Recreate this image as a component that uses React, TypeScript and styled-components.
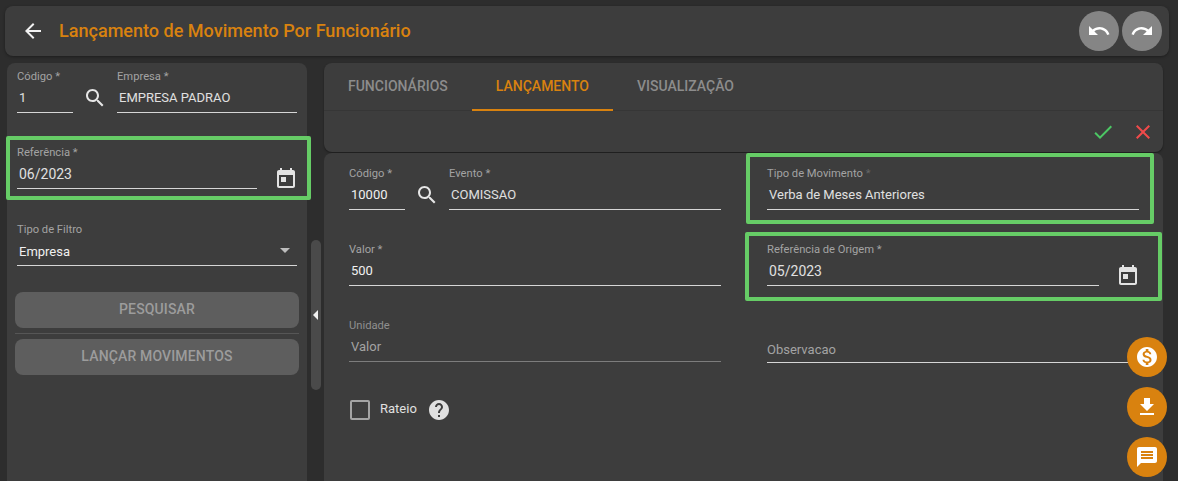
import React from "react";
import styled, { createGlobalStyle } from "styled-components";

const GlobalStyle = createGlobalStyle`
  html, body { margin: 0; padding: 0; height: 481px; overflow: hidden; background: #2d2d2d; }
  * { box-sizing: border-box; }
  body { font-family: Roboto, "Liberation Sans", sans-serif; }
`;

const Page = styled.div`
  position: relative;
  width: 1178px;
  height: 481px;
  overflow: hidden;
  padding: 6px 0 0 0;
`;

const Header = styled.header`
  display: flex;
  align-items: center;
  height: 50px;
  margin: 0 9px 7px 5px;
  padding: 0 7px 0 16px;
  background: #3d3d3d;
  border-radius: 8px;
  box-shadow: 0 1px 3px rgba(0, 0, 0, 0.35);
`;

const Title = styled.h1`
  flex: 1;
  margin: 0 0 0 14px;
  font-size: 18.05px;
  line-height: 24px;
  font-weight: 500;
  color: #d9820f;
`;

const RoundButton = styled.button`
  display: flex;
  align-items: center;
  justify-content: center;
  width: 40px;
  height: 40px;
  margin-left: 3px;
  padding: 0;
  border: 0;
  border-radius: 50%;
  background: #858585;
  color: #fff;
`;

const Icon = styled.svg<{ $size?: number; $color?: string }>`
  display: block;
  flex: none;
  width: ${(p) => p.$size ?? 24}px;
  height: ${(p) => p.$size ?? 24}px;
  fill: ${(p) => p.$color ?? "currentColor"};
`;

const Main = styled.main`
  display: flex;
  align-items: flex-start;
  margin-left: 7px;
`;

const Sidebar = styled.aside`
  width: 300px;
  height: 418px;
  padding: 6px 10px 0;
  background: #3d3d3d;
  border-radius: 8px 8px 0 0;
`;

const Gutter = styled.div`
  flex: none;
  width: 17px;
  padding: 177px 3px 0 4px;
`;

const Handle = styled.div`
  display: flex;
  align-items: center;
  height: 150px;
  padding-left: 2px;
  background: #4a4a4a;
  border-radius: 5px;
`;

const HandleArrow = styled.span`
  width: 0;
  height: 0;
  border-top: 5px solid transparent;
  border-bottom: 5px solid transparent;
  border-right: 5px solid #f0f0f0;
`;

const Content = styled.section`
  width: 839px;
  display: flex;
  flex-direction: column;
  gap: 1px;
`;

const TabsCard = styled.div`
  height: 89px;
  background: #3d3d3d;
  border-radius: 8px;
  box-shadow: 0 1px 2px rgba(0, 0, 0, 0.4);
`;

const TabRow = styled.nav`
  display: flex;
  height: 48px;
  border-bottom: 1px solid #363636;
`;

const Tab = styled.div<{ $active?: boolean }>`
  height: 48px;
  padding: 0 24px;
  margin-bottom: -1px;
  font-size: 14px;
  line-height: 46px;
  font-weight: 500;
  color: ${(p) => (p.$active ? "#d9820f" : "#8c8c8c")};
  border-bottom: 2px solid ${(p) => (p.$active ? "#d9820f" : "transparent")};
`;

const ActionRow = styled.div`
  display: flex;
  justify-content: flex-end;
  align-items: center;
  gap: 16px;
  height: 41px;
  padding: 0 8px 0 0;
`;

const FormCard = styled.div`
  height: 328px;
  padding: 13px 0 0 25px;
  background: #3d3d3d;
  border-radius: 8px 8px 0 0;
`;

const FormGrid = styled.div`
  display: grid;
  grid-template-columns: 372px 372px;
  column-gap: 46px;
  row-gap: 32px;
`;

const Row = styled.div<{ $framed?: boolean }>`
  position: ${(p) => (p.$framed ? "relative" : "static")};
  display: flex;
  align-items: flex-start;
`;

const Field = styled.div<{ $width?: number; $drop?: number }>`
  position: relative;
  flex: ${(p) => (p.$width ? `none` : `1`)};
  width: ${(p) => (p.$width ? `${p.$width}px` : "auto")};
  min-width: 0;
  margin-top: ${(p) => p.$drop ?? 0}px;
`;

const Label = styled.div<{ $disabled?: boolean }>`
  height: 14px;
  padding-top: 1px;
  font-size: 11.2px;
  line-height: 14px;
  color: ${(p) => (p.$disabled ? "#8f8f8f" : "#a3a3a3")};
`;

const Dim = styled.span`
  color: #666;
`;

const Value = styled.div<{ $disabled?: boolean; $strong?: boolean; $big?: boolean }>`
  position: relative;
  height: 30px;
  padding: 5px 0 0 2px;
  font-size: ${(p) => (p.$big ? "14px" : "13px")};
  line-height: 20px;
  color: ${(p) => (p.$disabled ? "#a3a3a3" : p.$strong ? "#f0f0f0" : "#e0e0e0")};
  border-bottom: 1px solid ${(p) => (p.$disabled ? "#7d7d7d" : "#d6d6d6")};
`;

const SelectValue = styled(Value)`
  padding-top: 6px;
`;

const PlaceholderValue = styled.div`
  height: 30px;
  padding: 7px 0 0;
  font-size: 13px;
  line-height: 20px;
  color: #a3a3a3;
  border-bottom: 1px solid #d6d6d6;
`;

const SelectArrow = styled.span`
  position: absolute;
  right: 0;
  top: 2px;
  color: #bdbdbd;
`;

const IconSlot = styled.div`
  flex: none;
  display: flex;
  justify-content: center;
  width: 44px;
  padding-top: 17px;
  color: #e6e6e6;
`;

const DateSlot = styled.div`
  flex: none;
  display: flex;
  justify-content: flex-end;
  width: 40px;
  height: 44px;
  padding-top: 22px;
  color: #e3e3e3;

  & > svg {
    margin-right: -1px;
  }
`;

const Highlight = styled.span<{ $t: number; $r: number; $b: number; $l: number }>`
  position: absolute;
  top: ${(p) => -p.$t}px;
  right: ${(p) => -p.$r}px;
  bottom: ${(p) => -p.$b}px;
  left: ${(p) => -p.$l}px;
  border: 4px solid #66cc66;
  border-radius: 2px;
  pointer-events: none;
`;

const SidebarGroup = styled.div<{ $top: number }>`
  margin-top: ${(p) => p.$top}px;
`;

const ButtonStack = styled.div`
  display: flex;
  flex-direction: column;
  width: 284px;
  margin: 26px 0 0 -2px;
`;

const DisabledButton = styled.button`
  height: 36px;
  padding: 0 0 2px;
  border: 0;
  border-radius: 8px;
  background: #5e5e5e;
  color: #9c9c9c;
  font-family: inherit;
  font-size: 14px;
  font-weight: 500;
  letter-spacing: 0.15px;
`;

const Divider = styled.hr`
  width: 100%;
  height: 1px;
  margin: 5px 0;
  border: 0;
  background: #565656;
`;

const CheckRow = styled.div`
  display: flex;
  align-items: flex-start;
  margin: 37px 0 0 1px;
`;

const CheckBox = styled.span`
  flex: none;
  width: 20px;
  height: 20px;
  border: 2px solid #a3a3a3;
  border-radius: 2px;
`;

const CheckLabel = styled.span`
  margin: 0 10px;
  font-size: 13px;
  line-height: 18px;
  color: #e0e0e0;
`;

const HelpSlot = styled.span`
  margin-top: -2px;
  color: #e0e0e0;
`;

const FabStack = styled.div`
  position: absolute;
  right: 11px;
  bottom: 4px;
  display: flex;
  flex-direction: column;
  gap: 10px;
`;

const Fab = styled.button`
  display: flex;
  align-items: center;
  justify-content: center;
  width: 40px;
  height: 40px;
  padding: 0;
  border: 0;
  border-radius: 50%;
  background: #d9820f;
  color: #fff;
`;

const paths = {
  back: "M20 11H7.83l5.59-5.59L12 4l-8 8 8 8 1.41-1.41L7.83 13H20v-2z",
  undo: "M12.5 8c-2.65 0-5.05.99-6.9 2.6L2 7v9h9l-3.62-3.62c1.39-1.16 3.16-1.88 5.12-1.88 3.54 0 6.55 2.31 7.6 5.5l2.37-.78C21.08 11.03 17.15 8 12.5 8z",
  redo: "M18.4 10.6C16.55 8.99 14.15 8 11.5 8c-4.65 0-8.58 3.03-9.96 7.22L3.9 16c1.05-3.19 4.05-5.5 7.6-5.5 1.95 0 3.73.72 5.12 1.88L13 16h9V7l-3.6 3.6z",
  search:
    "M15.5 14h-.79l-.28-.27C15.41 12.59 16 11.11 16 9.5 16 5.91 13.09 3 9.5 3S3 5.91 3 9.5 5.91 16 9.5 16c1.61 0 3.09-.59 4.23-1.57l.27.28v.79l5 4.99L20.49 19l-4.99-5zm-6 0C7.01 14 5 11.99 5 9.5S7.01 5 9.5 5 14 7.01 14 9.5 11.99 14 9.5 14z",
  today:
    "M19 3h-1V1h-2v2H8V1H6v2H5c-1.11 0-1.99.9-1.99 2L3 19c0 1.1.89 2 2 2h14c1.1 0 2-.9 2-2V5c0-1.1-.9-2-2-2zm0 16H5V8h14v11zM7 10h5v5H7z",
  arrowDown: "M7 10l5 5 5-5z",
  check: "M9 16.17L4.83 12l-1.42 1.41L9 19 21 7l-1.41-1.41z",
  close:
    "M19 6.41L17.59 5 12 10.59 6.41 5 5 6.41 10.59 12 5 17.59 6.41 19 12 13.41 17.59 19 19 17.59 13.41 12z",
  help: "M12 2C6.48 2 2 6.48 2 12s4.48 10 10 10 10-4.48 10-10S17.52 2 12 2zm1 17h-2v-2h2v2zm2.07-7.75l-.9.92C13.45 12.9 13 13.5 13 15h-2v-.5c0-1.1.45-2.1 1.17-2.83l1.24-1.26c.37-.36.59-.86.59-1.41 0-1.1-.9-2-2-2s-2 .9-2 2H8c0-2.21 1.79-4 4-4s4 1.79 4 4c0 .88-.36 1.68-.93 2.25z",
  money:
    "M12 2C6.48 2 2 6.48 2 12s4.48 10 10 10 10-4.48 10-10S17.52 2 12 2zm1.41 16.09V20h-2.67v-1.93c-1.71-.36-3.16-1.46-3.27-3.4h1.96c.1 1.05.82 1.87 2.65 1.87 1.96 0 2.4-.98 2.4-1.59 0-.83-.44-1.61-2.67-2.14-2.48-.6-4.18-1.62-4.18-3.67 0-1.72 1.39-2.84 3.11-3.21V4h2.67v1.95c1.86.45 2.79 1.86 2.85 3.39H14.3c-.05-1.11-.64-1.87-2.22-1.87-1.5 0-2.4.68-2.4 1.64 0 .84.65 1.39 2.67 1.91s4.18 1.39 4.18 3.91c-.01 1.83-1.38 2.83-3.12 3.16z",
  download: "M19 9h-4V3H9v6H5l7 7 7-7zM5 18v2h14v-2H5z",
  message:
    "M20 2H4c-1.1 0-1.99.9-1.99 2L2 22l4-4h14c1.1 0 2-.9 2-2V4c0-1.1-.9-2-2-2zm-2 12H6v-2h12v2zm0-3H6V9h12v2zm0-3H6V6h12v2z",
};

type IconName = keyof typeof paths;

const Glyph = ({ name, size, color }: { name: IconName; size?: number; color?: string }) => (
  <Icon viewBox="0 0 24 24" $size={size} $color={color} aria-hidden="true">
    <path d={paths[name]} />
  </Icon>
);

export default function App() {
  return (
    <Page>
      <GlobalStyle />
      <Header>
        <Glyph name="back" color="#f2f2f2" />
        <Title>Lançamento de Movimento Por Funcionário</Title>
        <RoundButton aria-label="Desfazer">
          <Glyph name="undo" />
        </RoundButton>
        <RoundButton aria-label="Refazer">
          <Glyph name="redo" />
        </RoundButton>
      </Header>
      <Main>
        <Sidebar>
          <Row>
            <Field $width={56}>
              <Label>Código *</Label>
              <Value>1</Value>
            </Field>
            <IconSlot>
              <Glyph name="search" />
            </IconSlot>
            <Field>
              <Label>Empresa *</Label>
              <Value>EMPRESA PADRAO</Value>
            </Field>
          </Row>
          <SidebarGroup $top={32}>
            <Row $framed>
              <Field>
                <Label>Referência *</Label>
                <Value $big>06/2023</Value>
              </Field>
              <DateSlot>
                <Glyph name="today" />
              </DateSlot>
              <Highlight $t={9} $r={14} $b={11} $l={11} />
            </Row>
          </SidebarGroup>
          <SidebarGroup $top={33}>
            <Field>
              <Label>Tipo de Filtro</Label>
              <SelectValue $strong>
                Empresa
                <SelectArrow>
                  <Glyph name="arrowDown" />
                </SelectArrow>
              </SelectValue>
            </Field>
          </SidebarGroup>
          <ButtonStack>
            <DisabledButton disabled>PESQUISAR</DisabledButton>
            <Divider />
            <DisabledButton disabled>LANÇAR MOVIMENTOS</DisabledButton>
          </ButtonStack>
        </Sidebar>
        <Gutter>
          <Handle>
            <HandleArrow />
          </Handle>
        </Gutter>
        <Content>
          <TabsCard>
            <TabRow>
              <Tab>FUNCIONÁRIOS</Tab>
              <Tab $active>LANÇAMENTO</Tab>
              <Tab>VISUALIZAÇÃO</Tab>
            </TabRow>
            <ActionRow>
              <Glyph name="check" color="#4cc764" />
              <Glyph name="close" color="#f04a4a" />
            </ActionRow>
          </TabsCard>
          <FormCard>
            <FormGrid>
              <Row>
                <Field $width={56}>
                  <Label>Código *</Label>
                  <Value $strong>10000</Value>
                </Field>
                <IconSlot>
                  <Glyph name="search" />
                </IconSlot>
                <Field>
                  <Label>Evento *</Label>
                  <Value>COMISSAO</Value>
                </Field>
              </Row>
              <Field>
                <Label>
                  Tipo de Movimento <Dim>*</Dim>
                </Label>
                <Value>Verba de Meses Anteriores</Value>
                <Highlight $t={13} $r={15} $b={14} $l={21} />
              </Field>
              <Field>
                <Label>Valor *</Label>
                <Value $strong>500</Value>
              </Field>
              <Row $framed>
                <Field>
                  <Label>Referência de Origem *</Label>
                  <Value $big>05/2023</Value>
                </Field>
                <DateSlot>
                  <Glyph name="today" />
                </DateSlot>
                <Highlight $t={10} $r={23} $b={15} $l={22} />
              </Row>
              <Field>
                <Label $disabled>Unidade</Label>
                <Value $disabled>Valor</Value>
              </Field>
              <Field $drop={1}>
                <Label />
                <PlaceholderValue>Observacao</PlaceholderValue>
              </Field>
            </FormGrid>
            <CheckRow>
              <CheckBox />
              <CheckLabel>Rateio</CheckLabel>
              <HelpSlot>
                <Glyph name="help" />
              </HelpSlot>
            </CheckRow>
          </FormCard>
        </Content>
      </Main>
      <FabStack>
        <Fab aria-label="Valores">
          <Glyph name="money" />
        </Fab>
        <Fab aria-label="Baixar">
          <Glyph name="download" />
        </Fab>
        <Fab aria-label="Mensagens">
          <Glyph name="message" />
        </Fab>
      </FabStack>
    </Page>
  );
}
